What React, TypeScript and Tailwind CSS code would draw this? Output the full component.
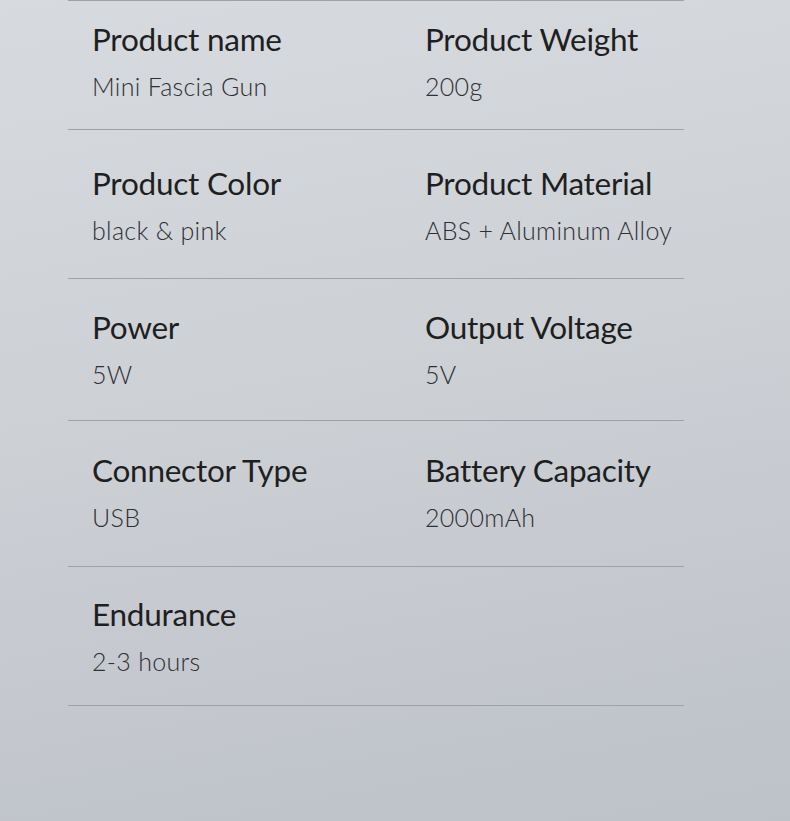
import React from "react";

const rows: { h: string; pt: string; items: [string, string][] }[] = [
  { h: "h-[129px]", pt: "pt-[18px]", items: [["Product name", "Mini Fascia Gun"], ["Product Weight", "200g"]] },
  { h: "h-[149px]", pt: "pt-[33px]", items: [["Product Color", "black & pink"], ["Product Material", "ABS + Aluminum Alloy"]] },
  { h: "h-[142px]", pt: "pt-[28px]", items: [["Power", "5W"], ["Output Voltage", "5V"]] },
  { h: "h-[146px]", pt: "pt-[29px]", items: [["Connector Type", "USB"], ["Battery Capacity", "2000mAh"]] },
  { h: "h-[139px]", pt: "pt-[27px]", items: [["Endurance", "2-3 hours"]] },
];

export default function App() {
  return (
    <div
      className="w-[790px] h-[821px] overflow-hidden bg-[linear-gradient(170deg,#d7dadf_0%,#cdd1d6_45%,#bdc1c8_100%)]"
      style={{ fontFamily: "Lato, 'Noto Sans', sans-serif" }}
    >
      <div className="ml-[68px] w-[616px] border-t border-[#9ea2a7]">
        {rows.map((r, i) => (
          <div key={i} className={`${r.h} ${r.pt} border-b border-[#9ea2a7] grid grid-cols-[333px_1fr] pl-[24px]`}>
            {r.items.map(([t, v]) => (
              <div key={t} className="flex flex-col">
                <div className="text-[31.5px] leading-[40px] text-[#1e1f21] tracking-[-0.25px]">{t}</div>
                <div className="mt-[12px] text-[25px] leading-[30px] text-[#2e3034] font-light tracking-[0.3px]">{v}</div>
              </div>
            ))}
          </div>
        ))}
      </div>
    </div>
  );
}
